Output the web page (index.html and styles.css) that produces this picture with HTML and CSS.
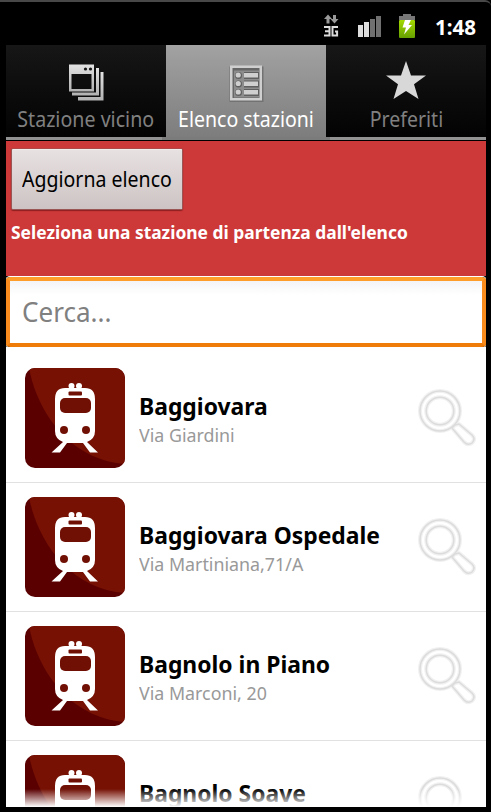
FILE: index.html
```
<!DOCTYPE html>
<html lang="it">
<head>
<meta charset="utf-8">
<title>Elenco stazioni</title>
<link rel="stylesheet" href="styles.css">
</head>
<body>
<svg class="defs" width="0" height="0" aria-hidden="true">
  <defs>
    <linearGradient id="metal" x1="0" y1="0" x2="0" y2="1"><stop offset="0" stop-color="#e2e2e2"/><stop offset="1" stop-color="#b2b2b2"/></linearGradient>
    <linearGradient id="green" x1="0" y1="0" x2="0" y2="1"><stop offset="0" stop-color="#a3d900"/><stop offset="1" stop-color="#66a000"/></linearGradient>
    <clipPath id="tile"><rect width="100" height="100" rx="10"/></clipPath>
    <symbol id="train" viewBox="0 0 100 100">
      <g clip-path="url(#tile)">
        <rect width="100" height="100" fill="#5a0000"/>
        <path d="M4 0C12 43 44 92 100 96V0Z" fill="#761104"/>
      </g>
      <g fill="#fff">
        <path d="M40 20H60Q70 20 70 31V63Q70 71 62 74L73 84.500H65L58 75H42L35 84.500H26.500L38 74Q30 71 30 63V31Q30 20 40 20Z"/>
        <circle cx="46.500" cy="18" r="3"/><circle cx="54" cy="18" r="3"/>
      </g>
      <g fill="#701005"><rect x="43.500" y="23.500" width="13.500" height="4" rx="1"/><rect x="35" y="30" width="31" height="15" rx="5"/><circle cx="39" cy="62" r="4"/><circle cx="61" cy="62" r="4"/></g>
    </symbol>
    <symbol id="lens" viewBox="0 0 60 60">
      <g fill="none" stroke-linejoin="round">
        <g stroke="#f1f1f1" stroke-width="4"><circle cx="22" cy="22" r="20"/><circle cx="22" cy="22" r="13.800"/><path d="M34 39L46 53Q50 57 54 54Q58 50 54 46L41 35L37 36Z"/></g>
        <g stroke="#dcdcdc" stroke-width="1.500"><circle cx="22" cy="22" r="20"/><circle cx="22" cy="22" r="13.800"/><path d="M34 39L46 53Q50 57 54 54Q58 50 54 46L41 35L37 36Z"/></g>
      </g>
    </symbol>
  </defs>
</svg>
<div class="phone">
  <header class="status">
    <svg width="104" height="30" viewBox="320 12 104 30">
      <g fill="#999"><path d="M328 14.500l4 4.500h-2.500v4.500h-3V19H324zM334.500 23.500l4-4.500H336v-4h-3v4h-2.500z"/></g>
      <g fill="none" stroke="#ddd" stroke-width="2"><path d="M324 27h5.500v8.500H324M325 31.200h4.500M338 27h-5.500v8.500h4.600v-4H335"/></g>
      <g fill="#ddd"><rect x="358" y="25" width="5" height="12"/><rect x="364" y="22" width="5" height="15"/></g>
      <g fill="#707070"><rect x="370" y="19" width="5" height="18"/><rect x="376" y="16" width="5" height="21"/></g>
      <path d="M399 20v-4h4v-2h8v2h4v4z" fill="#777"/><rect x="399" y="20" width="16" height="18" rx="1" fill="url(#green)"/>
      <path d="M405 20h6l-2.500 5h3.500l-8 9.500 2-7h-3.500z" fill="#fff"/>
    </svg>
    <span class="clock"><span class="fit">1:48</span></span>
  </header>
  <nav class="tabs">
    <div class="tab">
      <svg class="tab-icon" width="36" height="38" viewBox="0 0 36 38">
        <path d="M26 8h9.500v28.500H10V30h16z" fill="url(#metal)"/><path d="M26 8h6.500v25H10v-3h16z" fill="#0d0d0d"/>
        <path d="M26 4h5v27.500H4V27h22z" fill="url(#metal)"/><path d="M26 4h2v24.500H4V26h22z" fill="#0d0d0d"/>
        <path d="M1 .5h25v27H1zM3.500 10v15h20V10z" fill="url(#metal)" fill-rule="evenodd"/>
        <g fill="#151515"><circle cx="17.500" cy="5" r="1.600"/><circle cx="22.500" cy="5" r="1.600"/></g>
      </svg>
      <span class="fit label-near">Stazione vicino</span>
    </div>
    <div class="tab active">
      <svg class="tab-icon" width="36" height="38" viewBox="0 0 36 38"><path d="M1.500 2.500h34v36h-34z" fill="#727272"/><path d="M2 1.500h32v35H2z" fill="#cfcfcf"/><path d="M4.500 4h27v30h-27z" fill="#666"/><path d="M6 6.500h25v27H6z" fill="#8c8c8c"/>
        <g fill="#5f5f5f"><circle cx="10.500" cy="11.500" r="3.500"/><circle cx="10.500" cy="20" r="3.500"/><circle cx="10.500" cy="28.500" r="3.500"/><path d="M16 8h15v7H16zM16 16.500h15v7H16zM16 25h15v7H16z"/></g><g fill="#cfcfcf"><circle cx="10.200" cy="11" r="2.600"/><circle cx="10.200" cy="19.500" r="2.600"/><circle cx="10.200" cy="28" r="2.600"/><path d="M16 9h14v4.500H16zM16 17.500h14V22H16zM16 26h14v4.500H16z"/></g></svg>
      <span class="fit label-list">Elenco stazioni</span>
    </div>
    <div class="tab">
      <svg class="tab-icon" width="42" height="42" viewBox="0 0 42 42"><path d="M21 1l5 14.500h15L29 24.300 33.500 39 21 31 8.500 39 13 24.300 1 15.500h15z" fill="#d8d8d8"/></svg>
      <span class="fit label-fav">Preferiti</span>
    </div>
  </nav>
  <div class="strip"><i></i></div>
  <section class="banner">
    <button class="refresh"><span class="fit">Aggiorna elenco</span></button>
    <p><span class="fit">Seleziona una stazione di partenza dall'elenco</span></p>
  </section>
  <div class="search"><span class="fit">Cerca...</span></div>
  <main class="list">
    <article class="row"><svg class="thumb"><use href="#train"/></svg><div class="info"><h2><span class="fit">Baggiovara</span></h2><p><span class="fit">Via Giardini</span></p></div><svg class="lens"><use href="#lens"/></svg></article>
    <article class="row"><svg class="thumb"><use href="#train"/></svg><div class="info"><h2><span class="fit">Baggiovara Ospedale</span></h2><p><span class="fit">Via Martiniana,71/A</span></p></div><svg class="lens"><use href="#lens"/></svg></article>
    <article class="row"><svg class="thumb"><use href="#train"/></svg><div class="info"><h2><span class="fit">Bagnolo in Piano</span></h2><p><span class="fit">Via Marconi, 20</span></p></div><svg class="lens"><use href="#lens"/></svg></article>
    <article class="row"><svg class="thumb"><use href="#train"/></svg><div class="info"><h2><span class="fit">Bagnolo Soave</span></h2></div><svg class="lens"><use href="#lens"/></svg></article>
  </main>
</div>
</body>
</html>
```
FILE: styles.css
```
* { box-sizing: border-box; }
html, body { margin: 0; height: 812px; overflow: hidden; background: #000; }
body { font-family: "Noto Sans", "Open Sans", sans-serif; }
.defs { display: block; height: 0; }
h2, p { margin: 0; }
.fit { display: inline-block; white-space: nowrap; transform: scaleX(.93); transform-origin: left center; }
.phone { height: 812px; padding: 0 5px 5px 6px; border-top: 2px solid #484848; border-radius: 0 6px 0 0; display: flex; flex-direction: column; }
.status { height: 43px; flex: none; display: flex; align-items: flex-start; padding: 10px 0 0 314px; color: #fff; }
.status svg { flex: none; }
.clock { font: bold 21px/30px "Noto Sans", sans-serif; margin-left: 11px; }
.clock .fit { transform: scaleX(.98); }
.tabs { display: grid; grid-template-columns: repeat(3, 160px); height: 92px; flex: none; }
.tab { display: flex; flex-direction: column; align-items: center; justify-content: flex-end; background: linear-gradient(#171717, #0c0c0c 50%, #030303); color: #808080; font-size: 21px; line-height: 28px; padding-bottom: 4px; }
.tab .fit { transform-origin: center; }
.tab .label-near { transform: translateX(-.5px) scaleX(.935); }
.tab-icon { display: block; margin-bottom: 3px; }
.active { color: #fff; background: linear-gradient(#a2a2a2, #7d7d7d); }
.strip { height: 4px; flex: none; background: #929292; border-bottom: 1px solid #000; padding-left: 156px; }
.strip i { display: block; width: 168px; height: 3px; background: #7b7b7b; }
.banner { height: 135px; flex: none; background: #cd3838; padding: 7px 5px; }
.refresh { display: block; width: 172px; height: 62px; padding: 0 10px; border: 1px solid #9a5555; border-top-color: #b04848; border-radius: 2px; background: linear-gradient(#e8e1e1, #cdc3c4); box-shadow: inset 0 1px #f3eeee, 0 1px 1px #8d2020; font: 21px/30px "Noto Sans", sans-serif; color: #000; text-align: left; }
.banner p { font-size: 18px; line-height: 24px; font-weight: bold; color: #fff; margin-top: 10px; }
.banner p .fit { transform: scaleX(.967); }
.search { height: 71px; flex: none; border: 4px solid; border-color: #ff9d2b #f98c1c #ef7b08; border-radius: 4px; background: linear-gradient(#f3f4f6, #fff 14px); padding-left: 12px; font-size: 27px; line-height: 62px; color: #808080; }
.banner + .search { height: 70px; box-shadow: 0 0 0 1px #fff; margin-top: 1px; clip-path: inset(-1px 0 0 0); }
.search .fit { transform: scaleX(.965); }
.list { flex: 1; min-height: 0; overflow: hidden; background: #fff; padding-top: 7px; position: relative; }
.list::after { content: ""; position: absolute; left: 0; right: 0; bottom: 0; height: 18px; background: linear-gradient(rgba(255,255,255,0), #fff); }
.row { height: 129px; display: flex; align-items: flex-start; padding: 14px 8px 0 19px; border-bottom: 1px solid #e1e1e1; }
.thumb { width: 100px; height: 100px; flex: none; }
.info { flex: 1; padding: 22px 0 0 14px; }
h2 { font-size: 24px; line-height: 31px; font-weight: bold; color: #000; }
h2 .fit { transform: scaleX(.953); }
.info p { font-size: 18px; line-height: 26px; margin-top: 1px; color: #999; }
.info p .fit { transform: scaleX(.99); }
.lens { width: 60px; height: 60px; flex: none; margin-top: 21px; }
```
